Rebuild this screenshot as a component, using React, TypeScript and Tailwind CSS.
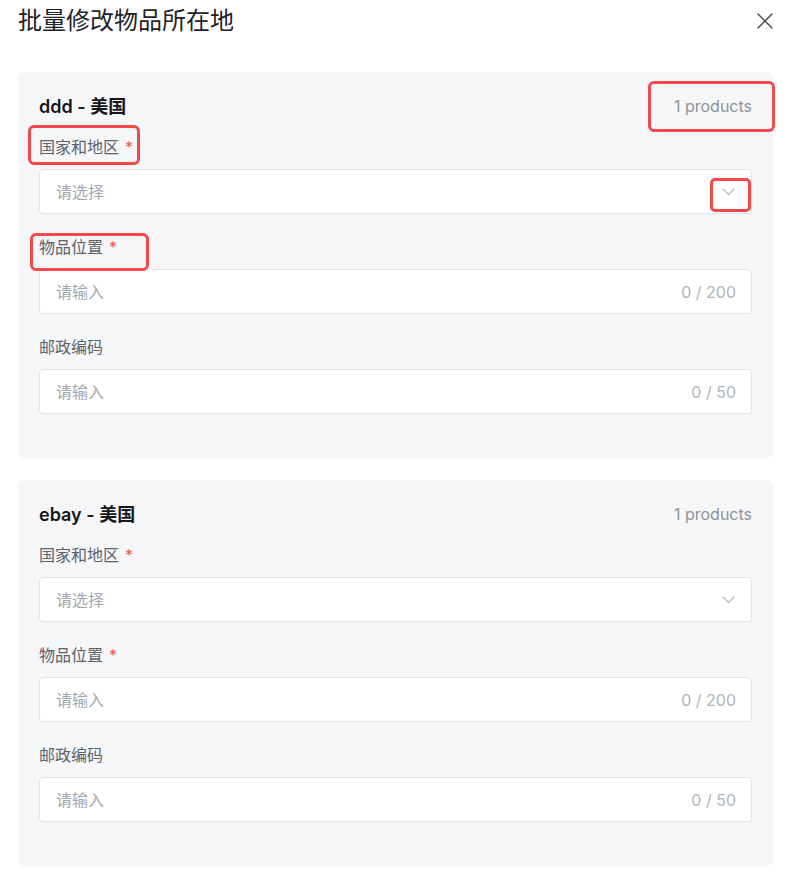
import React from "react";

type Field = { label: string; required?: boolean; kind: "select" | "input"; max?: number };

const fields: Field[] = [
  { label: "国家和地区", required: true, kind: "select" },
  { label: "物品位置", required: true, kind: "input", max: 200 },
  { label: "邮政编码", kind: "input", max: 50 },
];

function Chevron() {
  return (
    <svg width="13" height="8" viewBox="0 0 13 8" fill="none">
      <polyline points="1,1 6.5,6.5 12,1" stroke="#b4b9c1" strokeWidth="1.1" strokeLinecap="round" strokeLinejoin="round" />
    </svg>
  );
}

function Card({ title }: { title: string }) {
  return (
    <div className="ml-[18px] mr-[16px] rounded-[6px] bg-[#f5f6f8] px-[21px] pt-[24px] pb-[44px]">
      <div className="flex h-[20px] items-center justify-between">
        <span className="text-[18px] font-semibold text-[#15171a]">{title}</span>
        <span className="text-[16px] text-[#8d939c]">1 products</span>
      </div>
      <div className="mt-[20px] flex flex-col gap-[22px]">
        {fields.map((f) => (
          <div key={f.label} className="flex flex-col gap-[11px]">
            <div className="flex h-[22px] items-center text-[16px] text-[#5b626d]">
              {f.label}
              {f.required && <span className="ml-[6px] text-[#f25555]">*</span>}
            </div>
            <div className="flex h-[45px] items-center justify-between rounded-[4px] border border-[#e2e4e8] bg-white pl-[16px] pr-[15px]">
              <span className="text-[16px] text-[#a3a8b0]">{f.kind === "select" ? "请选择" : "请输入"}</span>
              {f.kind === "select" ? (
                <span className="pr-[1px]">
                  <Chevron />
                </span>
              ) : (
                <span className="text-[16px] text-[#b0b5bc]">0 / {f.max}</span>
              )}
            </div>
          </div>
        ))}
      </div>
    </div>
  );
}

export default function App() {
  return (
    <div className="relative min-h-[892px] w-full bg-white font-['Inter','Noto_Sans_CJK_SC',sans-serif]">
      <div className="flex h-[42px] items-center justify-between pl-[18px] pr-[16px]">
        <h1 className="text-[24px] font-normal text-[#1f2328]">批量修改物品所在地</h1>
        <svg width="16" height="16" viewBox="0 0 16 16" fill="none">
          <line x1="1" y1="1" x2="15" y2="15" stroke="#4a4f57" strokeWidth="1.5" strokeLinecap="round" />
          <line x1="15" y1="1" x2="1" y2="15" stroke="#4a4f57" strokeWidth="1.5" strokeLinecap="round" />
        </svg>
      </div>
      <div className="mt-[30px] flex flex-col gap-[22px]">
        <Card title="ddd - 美国" />
        <Card title="ebay - 美国" />
      </div>

      {/* annotation boxes */}
      <div className="pointer-events-none absolute left-[648px] top-[81px] h-[51px] w-[127px] rounded-[6px] border-[3px] border-[#f24a4a]" />
      <div className="pointer-events-none absolute left-[28px] top-[125px] h-[40px] w-[112px] rounded-[6px] border-[3px] border-[#f24a4a]" />
      <div className="pointer-events-none absolute left-[710px] top-[178px] h-[34px] w-[41px] rounded-[5px] border-[3px] border-[#f24a4a]" />
      <div className="pointer-events-none absolute left-[30px] top-[233px] h-[38px] w-[119px] rounded-[6px] border-[3px] border-[#f24a4a]" />
    </div>
  );
}
